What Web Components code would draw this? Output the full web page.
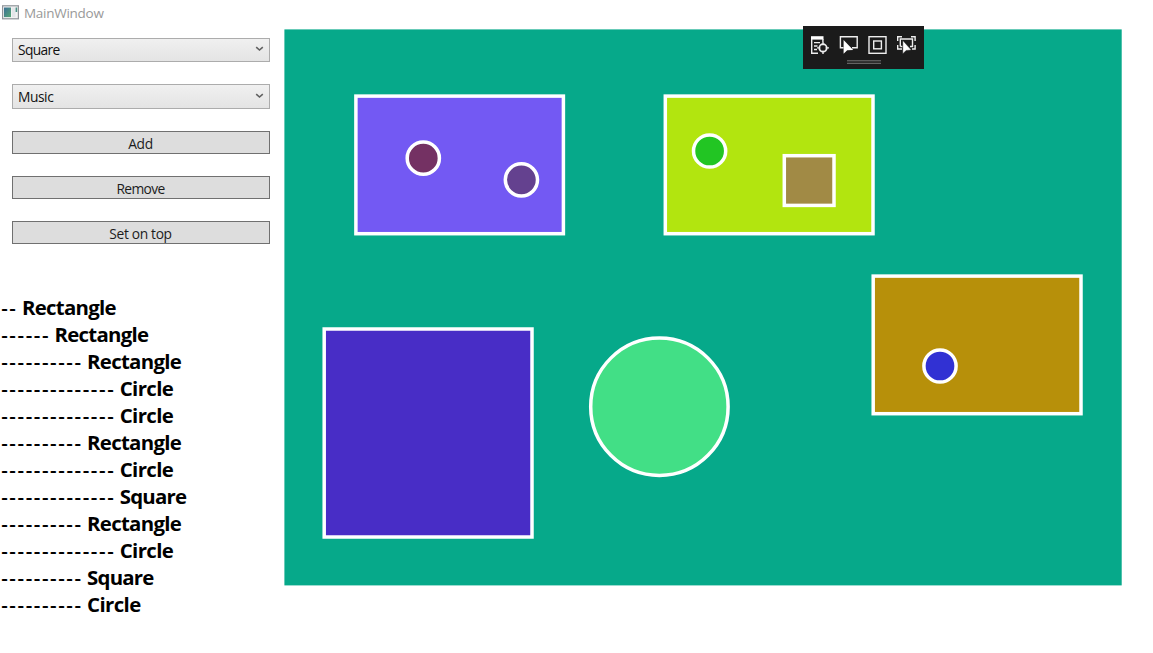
<!DOCTYPE html>
<html lang="en">
<head>
<meta charset="utf-8">
<title>MainWindow</title>
<style>
html,body{margin:0;height:100%;background:#fff;overflow:hidden;font-family:"Open Sans","Noto Sans",sans-serif}
</style>
</head>
<body>
<main-window></main-window>
<script>
const define = (name, html, setup) => {
  const template = document.createElement('template');
  template.innerHTML = html;
  customElements.define(name, class extends HTMLElement {
    connectedCallback() {
      if (this.shadowRoot) return;
      this.attachShadow({mode: 'open'}).append(template.content.cloneNode(true));
      if (setup) setup.call(this, this.shadowRoot);
    }
  });
};

// Text whose tracking is adjusted so that it fills a given width.
define('fit-text', `
<style>:host{display:block;flex:none}span{display:inline-block;white-space:pre;vertical-align:top}</style>
<span></span>`, function (root) {
  const span = root.querySelector('span');
  span.textContent = this.getAttribute('text');
  const target = parseFloat(this.getAttribute('width'));
  const natural = span.getBoundingClientRect().width;
  span.style.letterSpacing = ((target - natural) / span.textContent.length).toFixed(3) + 'px';
});

define('title-bar', `
<style>
:host{display:flex;align-items:center;height:26px;padding-left:2px;gap:5px;color:#999;font-size:13.5px;line-height:18px}
svg{display:block;margin-top:-1px}
</style>
<svg width="17" height="15" viewBox="0 0 17 15">
  <defs><linearGradient id="g" x1="0" y1="0" x2="1" y2="1"><stop offset="0" stop-color="#3b6f96"/><stop offset="1" stop-color="#57a875"/></linearGradient></defs>
  <rect x=".6" y=".8" width="15.8" height="13" fill="#f3f3f3" stroke="#909499" stroke-width="1.2"/>
  <rect x="2" y="2.5" width="7" height="9.6" fill="url(#g)"/>
  <rect x="10" y="2.5" width="3.5" height="9.6" fill="#e4e6e9"/>
  <rect x="13.6" y="2.5" width="1.6" height="4.5" fill="#4a9285"/>
</svg>
<fit-text text="MainWindow" width="79.6"></fit-text>`);

define('combo-box', `
<style>
:host{display:flex;box-sizing:border-box;height:24.3px;align-items:center;justify-content:space-between;border:1px solid #acacac;background:linear-gradient(#f0f0f0,#e4e4e4);padding:1px 5px 0;color:#111;font-size:13.8px;line-height:18px}
svg{display:block;margin-top:-2px}
</style>
<slot></slot>
<svg width="9" height="6" viewBox="0 0 9 6"><path d="M1.2 1.2 4.5 4 7.8 1.2" fill="none" stroke="#606060" stroke-width="1.6"/></svg>`);

define('push-button', `
<style>
:host{display:flex;box-sizing:border-box;height:22.6px;align-items:center;justify-content:center;border:1px solid #707070;background:#ddd;color:#1c1c1c;font-size:13.8px;line-height:18px;padding:3px 1px 0 0}
</style>
<slot></slot>`);

define('tree-row', `
<style>
:host{display:flex;height:27px;line-height:27px;font-size:20.4px;font-weight:700;color:#000}
.dash{margin:0 4.4px 0 .8px;font-weight:600}
</style>`, function (root) {
  const depth = +this.getAttribute('depth');
  const name = this.getAttribute('name');
  const widths = {Rectangle: 94, Circle: 53.5, Square: 66.5};
  const count = depth * 4 - 2;
  const dash = document.createElement('fit-text');
  dash.className = 'dash';
  dash.setAttribute('text', '-'.repeat(count));
  dash.setAttribute('width', (count * 8.15).toFixed(2));
  const label = document.createElement('fit-text');
  label.setAttribute('text', name);
  label.setAttribute('width', widths[name]);
  root.append(dash, label);
});

define('side-panel', `
<style>
:host{display:flex;flex-direction:column;width:284px;flex:none}
.controls{display:flex;flex-direction:column;padding:11.7px 14px 0 12px;height:256.3px}
combo-box,push-button{margin-bottom:22.4px}
.tree{display:flex;flex-direction:column;padding-left:.4px}
</style>
<div class="controls">
  <combo-box><fit-text text="Square" width="41.5"></fit-text></combo-box>
  <combo-box><fit-text text="Music" width="35.3"></fit-text></combo-box>
  <push-button><fit-text text="Add" width="24.6"></fit-text></push-button>
  <push-button><fit-text text="Remove" width="48"></fit-text></push-button>
  <push-button><fit-text text="Set on top" width="62.4"></fit-text></push-button>
</div>
<div class="tree">
  <tree-row depth="1" name="Rectangle"></tree-row>
  <tree-row depth="2" name="Rectangle"></tree-row>
  <tree-row depth="3" name="Rectangle"></tree-row>
  <tree-row depth="4" name="Circle"></tree-row>
  <tree-row depth="4" name="Circle"></tree-row>
  <tree-row depth="3" name="Rectangle"></tree-row>
  <tree-row depth="4" name="Circle"></tree-row>
  <tree-row depth="4" name="Square"></tree-row>
  <tree-row depth="3" name="Rectangle"></tree-row>
  <tree-row depth="4" name="Circle"></tree-row>
  <tree-row depth="3" name="Square"></tree-row>
  <tree-row depth="3" name="Circle"></tree-row>
</div>`);

// Drawing surface; its coordinates are those of the window.
define('shape-canvas', `
<style>:host{display:block;width:839px;height:560px;margin-top:2px}svg{display:block}</style>
<svg width="839" height="560" viewBox="284 28 839 560">
  <rect x="284.4" y="29.4" width="837.3" height="556" fill="#06a98a"/>
  <g stroke="#fff" stroke-width="3.5">
    <rect x="355.9" y="96.1" width="207.5" height="137.6" fill="#7359f3"/>
    <circle cx="423.3" cy="158.2" r="16.1" fill="#743163"/>
    <circle cx="521.4" cy="179.8" r="16.1" fill="#64418f"/>
    <rect x="665.3" y="96.1" width="207.7" height="137.6" fill="#b2e50f"/>
    <circle cx="709.6" cy="151" r="16.1" fill="#22c523"/>
    <rect x="784.3" y="155.7" width="49.7" height="49.7" fill="#a18a45"/>
    <rect x="873.2" y="276.1" width="207.8" height="137.6" fill="#b7900a"/>
    <circle cx="940" cy="366" r="16.1" fill="#3131d3"/>
    <rect x="324.2" y="329" width="207.8" height="208" fill="#482dc6"/>
    <circle cx="659.4" cy="406.7" r="68.7" fill="#42df86"/>
  </g>
</svg>`);

define('debug-toolbar', `
<style>
:host{display:block;position:absolute;left:803px;top:26px;width:121.4px;height:43.4px;background:#1b1b1b}
svg{display:block}
</style>
<svg width="121" height="43" viewBox="803 26 121 43" fill="none" stroke="#eee" stroke-width="1.4">
  <rect x="811" y="36.2" width="12.5" height="3.4" fill="#fff" stroke="none"/>
  <path d="M811.7 39V53.3H818M822.9 39V42M814 42.6h6M814 46h3.5M814 49.5h3"/>
  <circle cx="823" cy="47.9" r="3.7" stroke-width="1.8"/>
  <path d="M823 42v3.2M823 50.7v3.3M817 47.9h3.2M825.7 47.9H829"/>
  <path d="M843.5 47.8H840.4V36.8H857.2V47.8H852"/>
  <path d="M843.6 40V53.8l3.6-3.5 6-.3Z" fill="#fff" stroke="none"/>
  <rect x="869" y="36.7" width="17" height="16.6"/>
  <rect x="873.7" y="41" width="7.7" height="7.8"/>
  <path d="M897.7 41V36.8H902M911 36.8h4.1V41M897.7 45v4H902M915.1 45v4H912M900.3 46.5V39H912.5V46.5H910M900.3 46.5H902.5"/>
  <path d="M902.8 40.5V53.8l3.3-3.4 5.2-.3Z" fill="#fff" stroke="#1b1b1b" stroke-width=".4"/>
  <path d="M847 60.8H881M847 63.3H881" stroke="#777" stroke-width="1"/>
</svg>`);

define('main-window', `
<style>
:host{display:flex;flex-direction:column;position:relative;width:1153px;height:653px;background:#fff}
.body{display:flex;align-items:flex-start}
</style>
<title-bar></title-bar>
<div class="body"><side-panel></side-panel><shape-canvas></shape-canvas></div>
<debug-toolbar></debug-toolbar>`);
</script>
</body>
</html>
